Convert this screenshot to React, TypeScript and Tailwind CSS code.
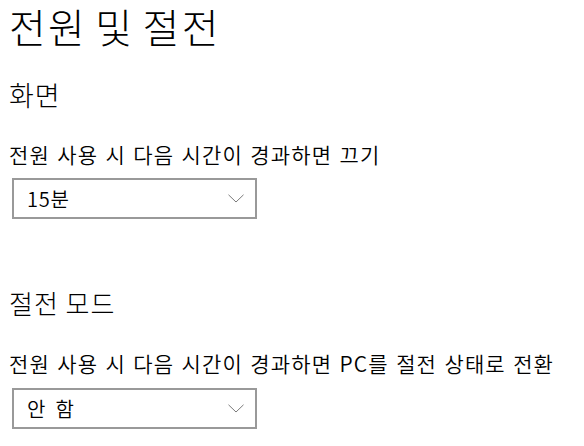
import React from "react";

const font = { fontFamily: '"Noto Sans CJK KR", "Noto Sans", sans-serif' };

function Chevron() {
  return (
    <svg width="16" height="9" viewBox="0 0 16 9" fill="none">
      <path d="M0.5 0.8 L8 8 L15.5 0.8" stroke="#7a7a7a" strokeWidth="1" />
    </svg>
  );
}

function Select({ value }: { value: string }) {
  return (
    <div className="ml-[3px] flex h-[41px] w-[245px] items-center justify-between border-2 border-[#999999] bg-white pl-[13px] pr-[11px]">
      <span className="text-[20px] leading-[20px] font-[350] tracking-[0.8px] [word-spacing:4px] text-black">
        {value}
      </span>
      <Chevron />
    </div>
  );
}

export default function App() {
  return (
    <div
      className="h-[446px] w-[584px] overflow-hidden bg-white pl-[9px] text-black"
      style={font}
    >
      <h1 className="mt-[6px] text-[40px] font-light leading-[40px] tracking-[2.3px] [word-spacing:-3px]">
        전원 및 절전
      </h1>

      <h2 className="mt-[35px] text-[27px] font-light leading-[27px] tracking-[1px]">화면</h2>
      <p className="mt-[36px] text-[21px] leading-[20px] font-[350] tracking-[1.15px] [word-spacing:1.5px]">
        전원 사용 시 다음 시간이 경과하면 끄기
      </p>
      <div className="mt-[14px]">
        <Select value="15분" />
      </div>

      <h2 className="mt-[71px] text-[26px] font-light leading-[26px] tracking-[1px]">
        절전 모드
      </h2>
      <p className="mt-[37px] text-[21px] leading-[20px] font-[350] tracking-[1.15px] [word-spacing:1.5px]">
        전원 사용 시 다음 시간이 경과하면 PC를 절전 상태로 전환
      </p>
      <div className="mt-[15px]">
        <Select value="안 함" />
      </div>
    </div>
  );
}
